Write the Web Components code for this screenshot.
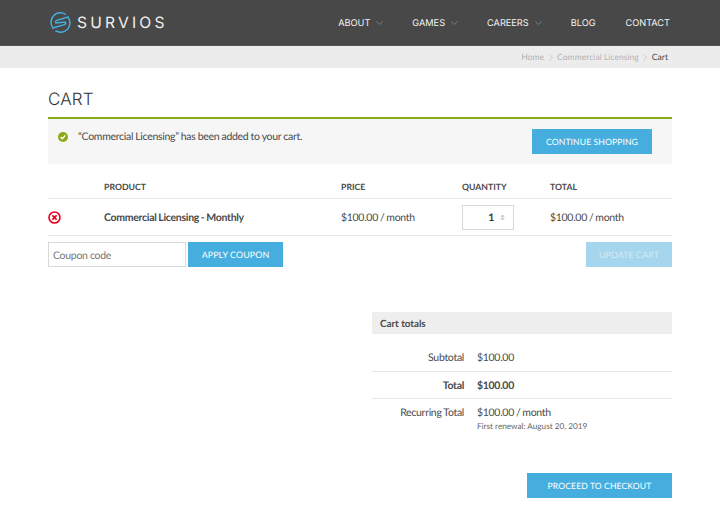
<!DOCTYPE html>
<html lang="en"><head><meta charset="utf-8"><title>Cart</title>
<style>
html,body{margin:0;padding:0;background:#fff;font-family:Lato,"Liberation Sans",sans-serif;color:#4a4a4a;text-rendering:geometricPrecision}
</style></head><body>
<site-header></site-header>
<bread-crumbs></bread-crumbs>
<cart-page></cart-page>
<script>
function def(name, html){
  customElements.define(name, class extends HTMLElement{
    constructor(){super();this.attachShadow({mode:'open'}).innerHTML=html;}
  });
}
const chev=`<svg width="7" height="4" viewBox="0 0 7 4" fill="none" stroke="#8a8a8a" stroke-width=".8"><path d="M.4.4L3.5 3.4 6.6.4"/></svg>`;
const crumb=`<svg width="4" height="7" viewBox="0 0 4 7" fill="none" stroke="#bbb" stroke-width=".7"><path d="M.4.4L3.4 3.5.4 6.6"/></svg>`;
def('blue-button',`<style>
:host{display:inline-flex;align-items:center;justify-content:center;box-sizing:border-box;height:25px;padding-top:2px;background:#45aede;color:#fff;font:400 8.9px/1 Lato,sans-serif;letter-spacing:.1px;word-spacing:0;white-space:nowrap;text-transform:uppercase}
:host([faded]){background:#a5d6ed;color:#d3ebf6}
:host([tight]){font-size:8.6px}
</style><slot></slot>`);
def('site-header',`<style>
:host{display:flex;align-items:center;justify-content:space-between;box-sizing:border-box;height:46px;background:#484848;border-bottom:1px solid #555;padding:0 50px;color:#fff}
.logo{display:flex;align-items:center;gap:6px;color:#f1f1f1}
.logo span{font:400 15.6px/1 Inter,sans-serif;letter-spacing:3.2px}
nav{display:flex;align-items:center;font:400 9.2px/1 Inter,sans-serif;padding-top:2px}
nav a{display:flex;align-items:center;gap:6px;color:#f4f4f4}
nav a svg{display:block}
.m1{margin-right:29px}.m2{margin-right:29px}.m3{margin-right:29px}.m4{margin-right:30px}
</style>
<div class="logo"><svg width="21" height="21" viewBox="0 0 21 21" fill="none" stroke="#45aede" stroke-width="1.5"><path d="M2.6 15.2A9.3 9.3 0 0 1 15.6 2.4"/><path d="M18.4 5.8A9.3 9.3 0 0 1 5.4 18.6"/><path d="M19 4.8L6.8 8.4Q4.6 9.6 6 11L15 10Q16.8 11.2 14.4 12.6L2 16.2"/></svg><span>SURVIOS</span></div>
<nav>
<a class="m1">ABOUT${chev}</a>
<a class="m2">GAMES${chev}</a>
<a class="m3">CAREERS${chev}</a>
<a class="m4">BLOG</a><a>CONTACT</a>
</nav>`);
def('bread-crumbs',`<style>
:host{display:flex;align-items:center;justify-content:flex-end;box-sizing:border-box;height:22px;background:#ececec;padding:0 52px 0 0;font:400 8.6px/1 Lato,sans-serif;color:#b4b4b4}
b{font-weight:400;color:#4a4a4a}
svg{margin:0 4.5px;display:block}
</style>Home${crumb}Commercial Licensing${crumb}<b>Cart</b>`);
def('cart-notice',`<style>
:host{display:flex;justify-content:space-between;align-items:flex-start;box-sizing:border-box;height:47px;background:#f6f6f6;border-top:2px solid #8aaa16;padding:10px 20px 0 10px;font:400 10.5px/13px Lato,sans-serif;letter-spacing:-.3px;word-spacing:-.2px;color:#4a4a4a}
.msg{display:flex;align-items:center;gap:10px;height:13px;margin-top:1px}
.msg span{margin-top:2px}
svg{display:block}
</style><div class="msg"><svg width="10" height="10" viewBox="0 0 10 10"><circle cx="5" cy="5" r="5" fill="#8aaa16"/><path d="M2.6 5.1L4.3 6.8 7.4 3.4" fill="none" stroke="#fff" stroke-width="1.4"/></svg><span>“Commercial Licensing” has been added to your cart.</span></div><slot></slot>`);
def('cart-table',`<style>
:host{display:grid;grid-template-columns:56px 237px 121px 88px 1fr;font:400 10.5px/13px Lato,sans-serif;letter-spacing:-.3px;word-spacing:-.4px;color:#4a4a4a}
.h{font-weight:700;font-size:8.7px;letter-spacing:0;word-spacing:0;height:35px;box-sizing:border-box;padding-top:16px;border-bottom:1px solid #e8e8e8;line-height:13px}
.c{height:37px;box-sizing:border-box;border-bottom:1px solid #e8e8e8;display:flex;align-items:center}
.t{padding-top:2px}
.n{font-weight:700}
.qty{display:flex;align-items:center;box-sizing:border-box;width:52px;height:25px;border:1px solid #d8d8d8;font-weight:700;font-size:10.5px;color:#333;justify-content:flex-end;gap:6px;padding-right:8px}
.qty span{margin-top:2px}
svg{display:block}
</style>
<div class="h"></div><div class="h">PRODUCT</div><div class="h">PRICE</div><div class="h">QUANTITY</div><div class="h">TOTAL</div>
<div class="c"><svg width="13" height="13" viewBox="0 0 13 13"><circle cx="6.5" cy="6.5" r="5.5" fill="#fff" stroke="#e8001c" stroke-width="1.6"/><path d="M4.4 4.4L8.6 8.6M8.6 4.4L4.4 8.6" stroke="#e8001c" stroke-width="1.7"/></svg></div>
<div class="c t n">Commercial Licensing - Monthly</div>
<div class="c t">$100.00 / month</div>
<div class="c"><div class="qty"><span>1</span><svg width="5" height="9" viewBox="0 0 5 9" fill="#9a9a9a"><circle cx="2.5" cy="4.5" r="2.4" fill="#efefef"/><path d="M2.5 1.9L3.8 3.6H1.2ZM2.5 7.1L1.2 5.4H3.8Z"/></svg></div></div>
<div class="c t">$100.00 / month</div>`);
def('coupon-row',`<style>
:host{display:flex;align-items:center;justify-content:space-between;padding-top:6px}
.l{display:flex;gap:2px}
.in{box-sizing:border-box;width:138px;height:25px;border:1px solid #d8d8d8;padding:3px 0 0 4px;display:flex;align-items:center;font:400 10.5px/1 Lato,sans-serif;letter-spacing:-.3px;color:#777}
</style><div class="l"><div class="in">Coupon code</div><slot name="apply"></slot></div><slot name="update"></slot>`);
def('cart-totals',`<style>
:host{display:block;width:300px;margin-left:auto;font:400 10.5px/13px Lato,sans-serif;letter-spacing:-.3px;word-spacing:-.4px;color:#4a4a4a}
.t{height:22px;background:#eee;padding:2px 0 0 8px;box-sizing:border-box;display:flex;align-items:center;font-weight:700;font-size:9.8px;letter-spacing:0;word-spacing:0;color:#4a4a4a}
.r{display:grid;grid-template-columns:92px 1fr;column-gap:13px;box-sizing:border-box;align-items:start}
.a,.b{border-bottom:1px solid #e8e8e8}
.r>div:first-child{text-align:right}
.a{height:38px;padding-top:18px}.b{height:27px;padding-top:8px;font-weight:700}.c{padding-top:8px}
small{display:block;font-size:8.2px;letter-spacing:0;word-spacing:0;line-height:13px;color:#666}
.cta{display:flex;justify-content:flex-end;margin-top:40px}
::slotted(blue-button){width:145px}
</style>
<div class="t">Cart totals</div>
<div class="r a"><div>Subtotal</div><div>$100.00</div></div>
<div class="r b"><div>Total</div><div>$100.00</div></div>
<div class="r c"><div>Recurring Total</div><div>$100.00 / month<small>First renewal: August 20, 2019</small></div></div>
<div class="cta"><slot></slot></div>`);
def('cart-page',`<style>
:host{display:block;box-sizing:border-box;padding:0 48px}
h1{margin:0;font:300 17px/20px Inter,sans-serif;color:#333;padding-top:22px;padding-bottom:7px;letter-spacing:.1px}
cart-notice blue-button{width:120px}
#a{width:95px}#u{width:86px}
cart-totals{margin-top:45px}
</style>
<h1>CART</h1>
<cart-notice><blue-button tight>Continue Shopping</blue-button></cart-notice>
<cart-table></cart-table>
<coupon-row><blue-button id="a" slot="apply">Apply Coupon</blue-button><blue-button id="u" slot="update" faded>Update Cart</blue-button></coupon-row>
<cart-totals><blue-button tight>Proceed to Checkout</blue-button></cart-totals>`);
</script>
</body></html>
